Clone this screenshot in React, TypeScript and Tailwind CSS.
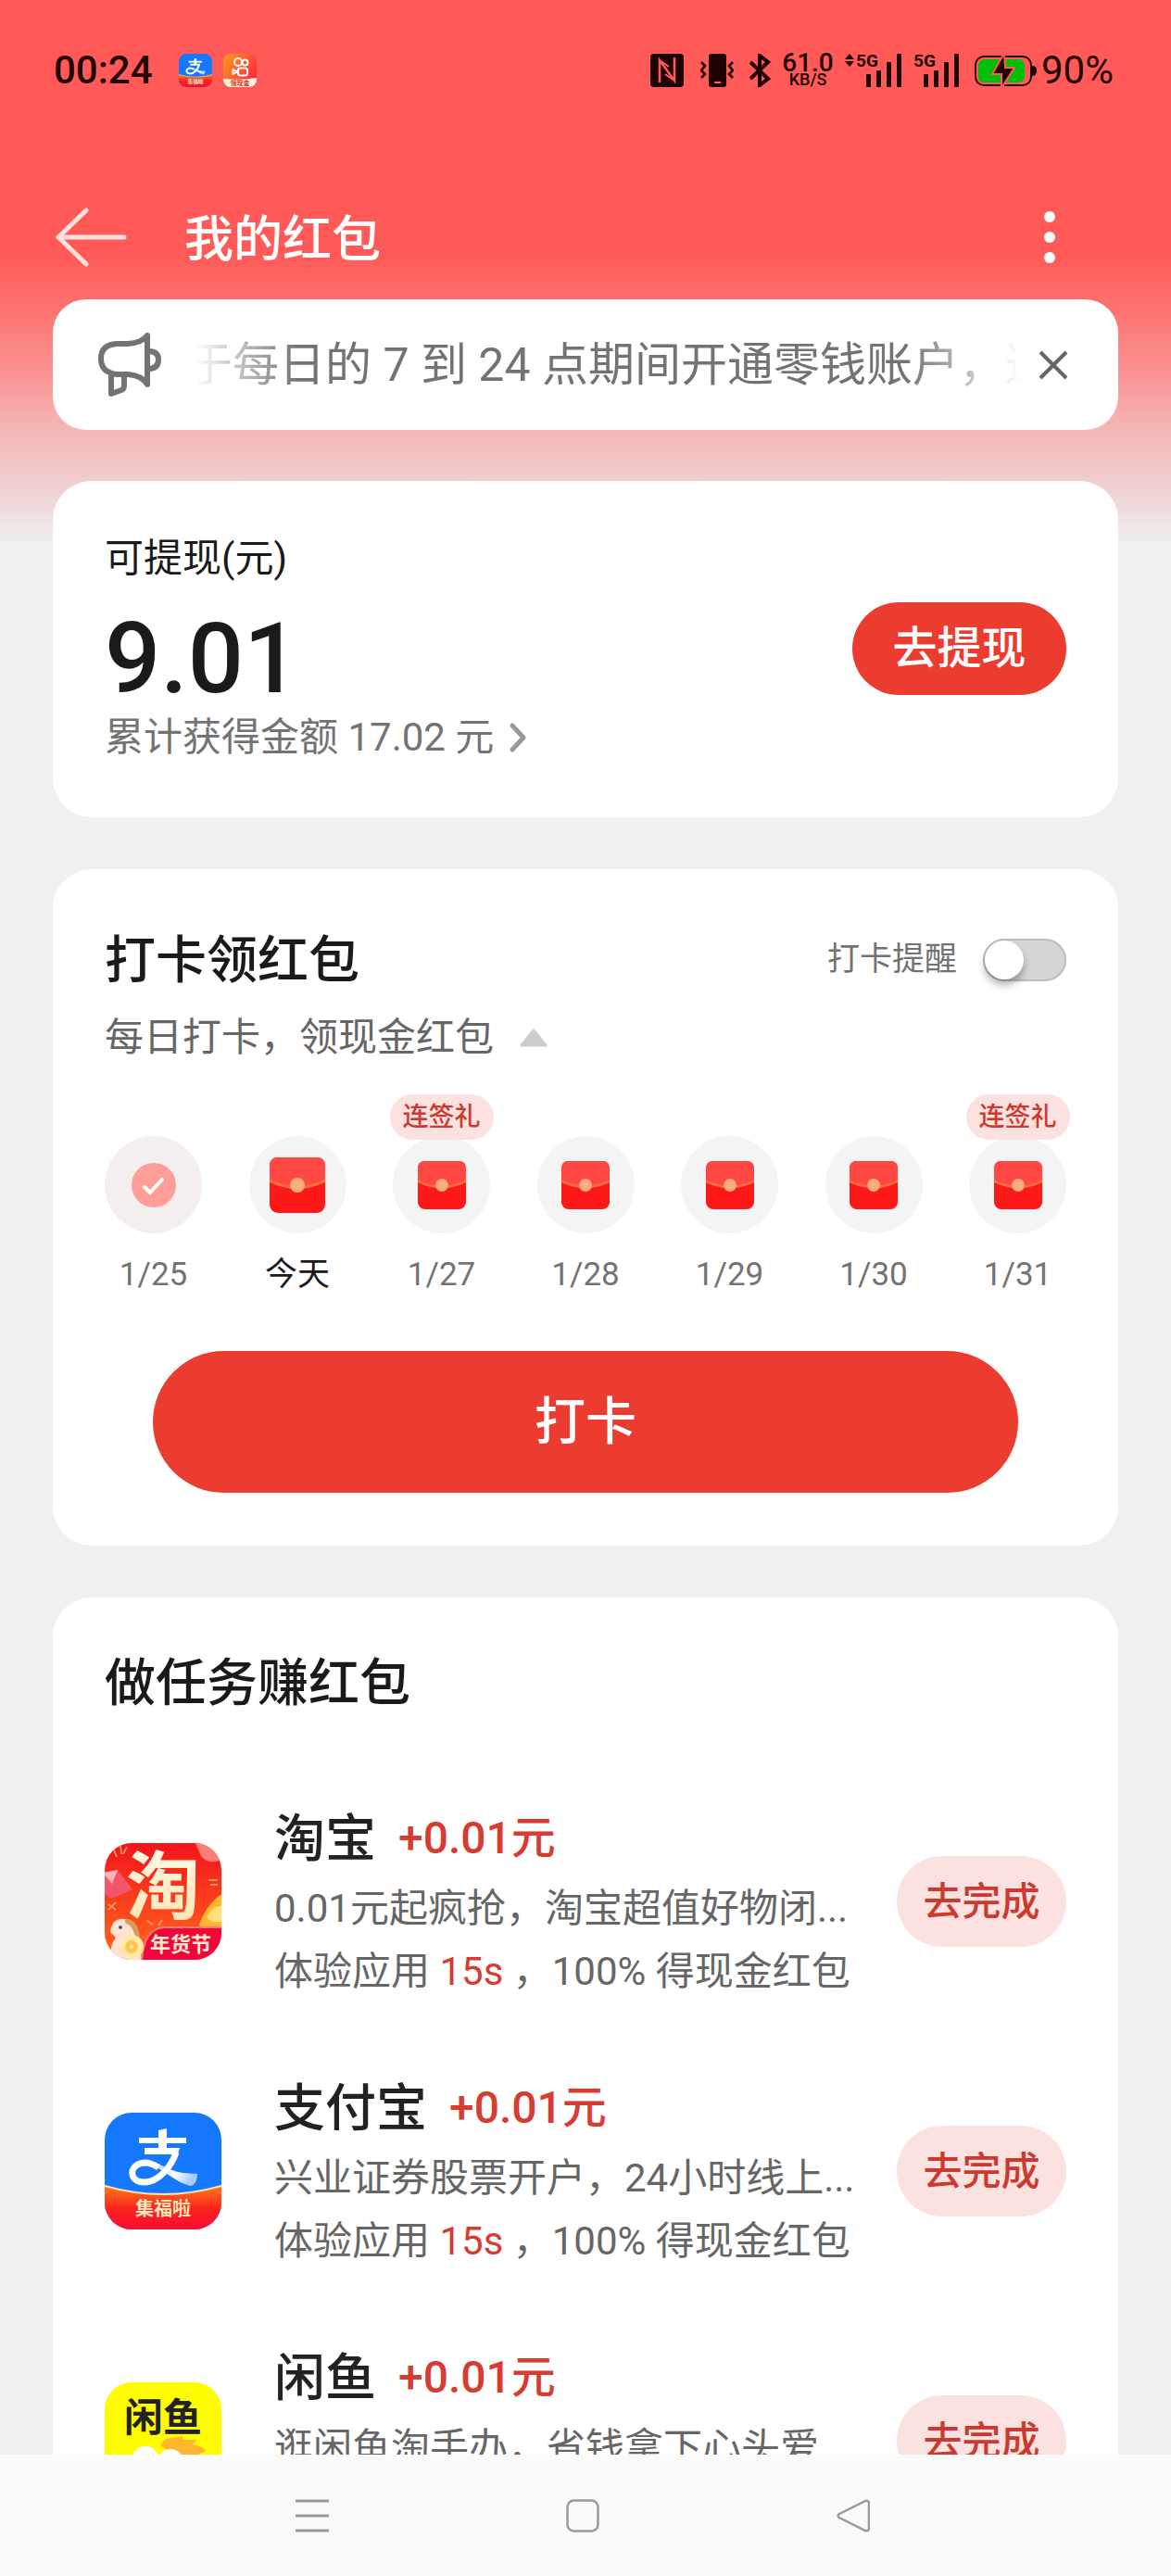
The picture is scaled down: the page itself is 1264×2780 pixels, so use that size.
import React, { useState } from 'react';

interface Day {
  label: string;
  state: 'done' | 'today' | 'future';
  gift?: boolean;
}

interface Task {
  name: string;
  reward: string;
  desc: string;
  icon: React.ReactNode;
}

const days: Day[] = [
  { label: '1/25', state: 'done' },
  { label: '今天', state: 'today' },
  { label: '1/27', state: 'future', gift: true },
  { label: '1/28', state: 'future' },
  { label: '1/29', state: 'future' },
  { label: '1/30', state: 'future' },
  { label: '1/31', state: 'future', gift: true },
];

const AlipayLogo: React.FC<{ id: string; className: string }> = ({ id, className }) => (
  <svg viewBox="0 0 126 126" className={className} aria-hidden="true">
    <defs>
      <clipPath id={`${id}-clip`}>
        <rect width="126" height="126" rx="29" />
      </clipPath>
      <linearGradient id={`${id}-band`} x1="0" y1="0" x2="0" y2="1">
        <stop offset="0" stopColor="#ff7a1c" />
        <stop offset="0.5" stopColor="#f9261c" />
        <stop offset="1" stopColor="#fb0b35" />
      </linearGradient>
      <linearGradient id={`${id}-tail`} x1="0" y1="0" x2="1" y2="0.3">
        <stop offset="0" stopColor="#fff" />
        <stop offset="0.35" stopColor="#b9d6ff" />
        <stop offset="0.7" stopColor="#fff" />
        <stop offset="1" stopColor="#a8ccff" />
      </linearGradient>
    </defs>
    <g clipPath={`url(#${id}-clip)`}>
      <rect width="126" height="126" fill="#1678ff" />
      <path d="M0 79 Q63 97 126 79 V126 H0Z" fill={`url(#${id}-band)`} />
      <path d="M0 79 Q63 97 126 79" fill="none" stroke="#ffe3b0" strokeWidth="2" />
      <path d="M58 19 L67 17 V44 H58Z M37 27 H88 V33 H37Z M43 38 H81 L79 45 H43Z" fill="#fff" />
      <path
        d="M40 53 C56 50 66 62 84 65 L100 66 C100 73 97 79 92 79 C76 75 64 61 50 57 C45 56 42 55 40 53Z"
        fill={`url(#${id}-tail)`}
      />
      <path d="M77 43 C72 58 58 75 43 75 C29 75 26 63 34 57 C41 52 50 54 58 59" fill="none" stroke="#fff" strokeWidth="7" />
      <text x="63" y="111" fontSize="20" fontWeight="700" fill="#ffe6bd" textAnchor="middle">集福啦</text>
    </g>
  </svg>
);

const TaobaoLogo: React.FC = () => (
  <svg viewBox="0 0 126 126" className="size-[126px] shrink-0" aria-hidden="true">
    <defs>
      <clipPath id="tb-clip">
        <rect width="126" height="126" rx="29" />
      </clipPath>
      <linearGradient id="tb-bg" x1="0" y1="0" x2="0" y2="1">
        <stop offset="0" stopColor="#f5141b" />
        <stop offset="1" stopColor="#ff6a1e" />
      </linearGradient>
      <linearGradient id="tb-char" x1="0" y1="0" x2="0" y2="1">
        <stop offset="0" stopColor="#fff9e6" />
        <stop offset="1" stopColor="#ffe2b0" />
      </linearGradient>
    </defs>
    <g clipPath="url(#tb-clip)">
      <rect width="126" height="126" fill="url(#tb-bg)" />
      <path d="M98 0 H126 V18 Q112 24 104 14Z" fill="#ff7f78" />
      <path d="M-2 32 L14 29 L30 50 L8 60 L-2 54Z" fill="#f5556b" />
      <path d="M-2 32 L8 44 L14 29Z" fill="#ffb4bd" />
      <path d="M9 5 L13 15 M17 2 L18 12 M24 4 L20 12 M4 66 L12 72 M12 64 L4 72 M46 84 L52 88 M62 83 L58 89 M112 40 H122 M114 45 H122" stroke="#ffb56b" strokeWidth="1.5" />
      <path d="M102 88 Q108 70 122 58 L128 54 V92 H104Z" fill="#ffb52e" />
      <path d="M110 80 Q118 66 128 68 V84 Q116 88 110 80Z" fill="#ffe07a" />
      <text x="63" y="75" fontSize="80" fontWeight="700" fill="url(#tb-char)" textAnchor="middle">淘</text>
      <path d="M6 96 Q8 80 22 82 Q36 86 36 104 L40 126 H8 Q4 112 12 102Z" fill="#ffe3d0" />
      <path d="M22 82 Q36 82 38 102 L33 104 Q32 90 22 86Z" fill="#d79c5e" />
      <circle cx="17" cy="91" r="2" fill="#4a5a8a" />
      <path d="M40 128 Q42 92 64 91 H128 V128Z" fill="#f0063c" stroke="#ff7d66" strokeWidth="2" />
      <circle cx="29" cy="112" r="13" fill="#ffe9a8" />
      <circle cx="29" cy="112" r="7" fill="#ffc84a" />
      <circle cx="29" cy="112" r="2" fill="#fff3cf" />
      <text x="82" y="117" fontSize="22" fontWeight="700" fill="#ffeccb" textAnchor="middle">年货节</text>
    </g>
  </svg>
);

const XianyuLogo: React.FC = () => (
  <svg viewBox="0 0 126 126" className="size-[126px] shrink-0" aria-hidden="true">
    <rect width="126" height="126" rx="29" fill="#fffb00" />
    <text x="63" y="53" fontSize="42" fontWeight="700" fill="#222" textAnchor="middle">闲鱼</text>
    <path d="M60 68 Q66 58 74 60 L84 58 L84 62 L99 62 L95 67 Q106 69 109 74 Q92 84 74 78Z" fill="#ffb52e" />
    <circle cx="44" cy="84" r="15" fill="#fff" />
    <circle cx="71" cy="86" r="14" fill="#fff" />
    <circle cx="46" cy="88" r="5" fill="#222" />
    <circle cx="70" cy="90" r="5" fill="#222" />
  </svg>
);

const KuaishouLogo: React.FC = () => (
  <svg viewBox="0 0 36 36" className="size-9" aria-hidden="true">
    <defs>
      <clipPath id="ks-clip">
        <rect width="36" height="36" rx="8" />
      </clipPath>
      <linearGradient id="ks-bg" x1="0" y1="0" x2="1" y2="0.6">
        <stop offset="0" stopColor="#ff9d1f" />
        <stop offset="1" stopColor="#fb2d3c" />
      </linearGradient>
    </defs>
    <g clipPath="url(#ks-clip)">
      <rect width="36" height="36" fill="url(#ks-bg)" />
      <g fill="none" stroke="#fff" strokeWidth="2">
        <circle cx="16" cy="9" r="4" />
        <circle cx="23.5" cy="9.5" r="3" />
        <rect x="16" y="15.5" width="10" height="8" rx="2.5" />
        <path d="M10.5 17 L15 19.5 L10.5 22Z" strokeLinejoin="round" />
      </g>
      <path d="M0 27 Q18 29 36 26 V36 H0Z" fill="#fff0dc" />
      <text x="18" y="34" fontSize="7" fontWeight="700" fill="#c0392b" textAnchor="middle">领现金</text>
    </g>
  </svg>
);

const SignalBars: React.FC<{ arrows?: boolean }> = ({ arrows }) => (
  <svg viewBox="0 0 62 36" className="h-9 w-[62px] overflow-visible" fill="#200303" aria-hidden="true">
    {arrows && <path d="M0 6 L5 0 L10 6Z M0 8 L5 14 L10 8Z" />}
    <text x="12" y="14" fontSize="19" fontWeight="700">5G</text>
    <rect x="23" y="22" width="5" height="14" rx="1" />
    <rect x="34" y="18" width="5" height="18" rx="1" />
    <rect x="45" y="9" width="5" height="27" rx="1" />
    <rect x="56" y="0" width="5" height="36" rx="1" />
  </svg>
);

const Envelope: React.FC<{ className: string }> = ({ className }) => (
  <svg viewBox="0 0 60 60" className={className} aria-hidden="true">
    <rect width="60" height="60" rx="9" fill="#fe1919" />
    <path d="M0 25 V9 Q0 0 9 0 H51 Q60 0 60 9 V25 Q30 40 0 25Z" fill="#ff4744" />
    <path d="M0 25 Q30 40 60 25" fill="none" stroke="#ff7139" strokeWidth="3" />
    <circle cx="30" cy="30" r="8" fill="#ffab80" />
  </svg>
);

const tasks: Task[] = [
  { name: '淘宝', reward: '+0.01元', desc: '0.01元起疯抢，淘宝超值好物闭...', icon: <TaobaoLogo /> },
  {
    name: '支付宝',
    reward: '+0.01元',
    desc: '兴业证券股票开户，24小时线上...',
    icon: <AlipayLogo id="task-alipay" className="size-[126px] shrink-0" />,
  },
  { name: '闲鱼', reward: '+0.01元', desc: '逛闲鱼淘手办，省钱拿下心头爱', icon: <XianyuLogo /> },
];

const StatusBar: React.FC = () => (
  <div className="flex h-[152px] shrink-0 items-center justify-between pl-[58px] pr-[62px] text-[#200303]">
    <div className="flex items-center gap-3">
      <span className="mr-4 text-[42px] font-medium leading-none">00:24</span>
      <AlipayLogo id="status-alipay" className="size-9" />
      <KuaishouLogo />
    </div>
    <div className="flex items-center">
      <svg viewBox="0 0 36 36" className="mr-[18px] size-9" aria-hidden="true">
        <rect width="36" height="36" rx="4" fill="#200303" />
        <path d="M10 31 V7 L26 29 V4" fill="none" stroke="#ff5a57" strokeWidth="2.5" />
        <path d="M10 7 L20 14 M26 29 L16 22" fill="none" stroke="#ff5a57" strokeWidth="2" />
      </svg>
      <svg viewBox="0 0 36 36" className="mr-4 size-9" aria-hidden="true">
        <rect x="9" width="19" height="36" rx="3" fill="#200303" />
        <rect x="15" y="30" width="7" height="2" fill="#ff5a57" />
        <path d="M1 9 L5 13 L1 18 L5 22 L1 26 M35 9 L31 13 L35 18 L31 22 L35 26" fill="none" stroke="#200303" strokeWidth="2.5" />
      </svg>
      <svg viewBox="0 0 24 36" className="mr-3 h-9 w-6" aria-hidden="true">
        <path d="M2 9 L21 27 L12 34 V2 L21 9 L2 27" fill="none" stroke="#200303" strokeWidth="4" />
      </svg>
      <div className="mr-3 flex w-14 flex-col items-center font-medium">
        <span className="text-[28px] leading-5">61.0</span>
        <span className="text-[18px] leading-4">KB/S</span>
      </div>
      <SignalBars arrows />
      <SignalBars />
      <svg viewBox="0 0 68 36" className="ml-4 h-9 w-[68px]" aria-hidden="true">
        <rect x="1" y="3" width="60" height="31" rx="9" fill="none" stroke="#200303" strokeWidth="2" />
        <path d="M62 13 Q67 13 67 18 Q67 24 62 24Z" fill="#200303" />
        <rect x="4" y="6" width="50" height="25" rx="6" fill="#00bf0b" />
        <path d="M32 -1 L19 22 H29 V37 L43 15 H33Z" fill="#200303" stroke="#ff5a57" strokeWidth="2" />
      </svg>
      <span className="ml-1 text-[42px] leading-none">90%</span>
    </div>
  </div>
);

const Header: React.FC = () => (
  <header className="mt-[37px] flex h-[134px] shrink-0 items-center px-[60px] text-white">
    <button type="button" aria-label="返回" className="mr-[61px]">
      <svg viewBox="0 0 78 64" className="h-16 w-[78px]" fill="none" stroke="#ffe0df" strokeWidth="5" strokeLinecap="round" strokeLinejoin="round">
        <path d="M33 3 L3 32 L33 61 M3 32 H74" />
      </svg>
    </button>
    <h1 className="pt-1.5 text-[53px] font-medium leading-none">我的红包</h1>
    <button type="button" aria-label="更多" className="ml-auto">
      <svg viewBox="0 0 142 58" className="h-[58px] w-[142px]" fill="#fff">
        <circle cx="71" cy="7" r="6" />
        <circle cx="71" cy="29" r="6" />
        <circle cx="71" cy="51" r="6" />
      </svg>
    </button>
  </header>
);

const Notice: React.FC<{ onClose: () => void }> = ({ onClose }) => (
  <section className="mx-[57px] mb-[55px] flex h-[141px] shrink-0 items-center rounded-[36px] bg-white pl-[48px] pr-[52px] text-[#737373]">
    <svg viewBox="0 0 70 70" className="size-[70px] shrink-0" fill="none" stroke="#737373" strokeWidth="6" strokeLinejoin="round" aria-hidden="true">
      <path d="M21 12 H33 Q48 11 54 3 V56 Q48 46 33 45 H21 Q4 43 4 28 Q4 13 21 12Z" />
      <path d="M55 20 Q66 20 66 29 Q66 39 55 39" />
      <path d="M15 46 V66 L26 62 Q29 61 29 57 V46" />
    </svg>
    <p className="ml-[26px] min-w-0 flex-1 overflow-hidden whitespace-nowrap text-[50px] leading-[72px] [mask-image:linear-gradient(to_right,transparent_8px,#000_120px,#000_calc(100%-130px),transparent_calc(100%-4px))]">
      于每日的 7 到 24 点期间开通零钱账户，避
    </p>
    <button type="button" aria-label="关闭" onClick={onClose} className="ml-3">
      <svg viewBox="0 0 36 36" className="size-9" fill="none" stroke="#666" strokeWidth="4">
        <path d="M4 4 L32 32 M32 4 L4 32" />
      </svg>
    </button>
  </section>
);

const Balance: React.FC = () => (
  <section className="flex items-center justify-between rounded-[42px] bg-white px-14 pb-[51px] pt-[50px]">
    <div className="pb-3">
      <h2 className="text-[42px] leading-[68px] text-[#1a1a1a]">可提现(元)</h2>
      <p className="mt-3 text-[106px] font-medium leading-[124px] text-[#1a1a1a]">9.01</p>
      <a href="#records" className="flex items-center gap-4 text-[42px] leading-[46px] text-[#737373]">
        累计获得金额 17.02 元
        <svg viewBox="0 0 20 34" className="h-[34px] w-5" fill="none" stroke="#999" strokeWidth="5" strokeLinecap="round" strokeLinejoin="round" aria-hidden="true">
          <path d="M4 4 L16 17 L4 30" />
        </svg>
      </a>
    </div>
    <button type="button" className="h-[100px] w-[231px] rounded-full bg-[#ec3b2f] text-[48px] font-medium text-white">
      去提现
    </button>
  </section>
);

const DayItem: React.FC<{ day: Day }> = ({ day }) => (
  <li className="relative flex w-[105px] flex-col items-center">
    {day.gift && (
      <span className="absolute -top-[45px] flex h-[49px] w-28 items-center justify-center rounded-full bg-[#fbe2e1] text-[28px] font-medium text-[#cd392f]">
        连签礼
      </span>
    )}
    <div className={`flex size-[105px] items-center justify-center rounded-full ${day.state === 'done' ? 'bg-[#f4eeee]' : 'bg-[#f4f4f4]'}`}>
      {day.state === 'done' && (
        <svg viewBox="0 0 48 48" className="size-12" aria-hidden="true">
          <circle cx="24" cy="24" r="24" fill="#ff9d99" />
          <path d="M14 26 L20 32 L33 18" fill="none" stroke="#fff" strokeWidth="4" strokeLinecap="round" strokeLinejoin="round" />
        </svg>
      )}
      {day.state === 'today' && <Envelope className="size-[60px]" />}
      {day.state === 'future' && <Envelope className="size-[52px]" />}
    </div>
    <span className={`mt-5 whitespace-nowrap text-[35px] leading-[50px] ${day.state === 'today' ? 'text-[#1a1a1a]' : 'text-[#737373]'}`}>
      {day.label}
    </span>
  </li>
);

const CheckIn: React.FC = () => {
  const [remind, setRemind] = useState(false);

  return (
    <section className="rounded-[42px] bg-white px-14 pb-[57px] pt-[56px]">
      <div className="flex items-center justify-between">
        <h2 className="text-[55px] font-medium leading-[84px] text-[#1a1a1a]">打卡领红包</h2>
        <label className="flex items-center gap-7 text-[35px] text-[#737373]">
          打卡提醒
          <input
            type="checkbox"
            role="switch"
            checked={remind}
            onChange={(e) => setRemind(e.target.checked)}
            className="flex h-[46px] w-[90px] appearance-none items-center rounded-full border-2 border-[#bdbdbd] bg-[#d6d6d6] before:size-[42px] before:rounded-full before:bg-white before:shadow-[0_6px_8px_rgba(0,0,0,0.3)] checked:justify-end checked:bg-[#ec3b2f]"
          />
        </label>
      </div>
      <p className="flex items-center gap-7 text-[42px] leading-[84px] text-[#666]">
        每日打卡，领现金红包
        <svg viewBox="0 0 30 20" className="h-5 w-[30px]" aria-hidden="true">
          <path d="M15 2 L28 18 H2Z" fill="#ccc" stroke="#ccc" strokeWidth="3" strokeLinejoin="round" />
        </svg>
      </p>
      <ul className="mt-16 flex justify-between">
        {days.map((day) => (
          <DayItem key={day.label} day={day} />
        ))}
      </ul>
      <div className="mt-[57px] px-[52px]">
        <button type="button" className="h-[153px] w-full rounded-full bg-[#ec3b2f] text-[55px] font-medium text-white">
          打卡
        </button>
      </div>
    </section>
  );
};

const TaskRow: React.FC<{ task: Task }> = ({ task }) => (
  <li className="flex items-center">
    {task.icon}
    <div className="ml-[57px] min-w-0 flex-1">
      <h3 className="flex items-center gap-6 text-[55px] font-medium leading-[84px] text-[#222]">
        {task.name}
        <span className="text-[48px] text-[#d63c31]">{task.reward}</span>
      </h3>
      <p className="whitespace-nowrap text-[42px] leading-[68px] text-[#666]">{task.desc}</p>
      <p className="whitespace-nowrap text-[42px] leading-[68px] text-[#666]">
        体验应用 <span className="text-[#d63c31]">15s</span> ，100% 得现金红包
      </p>
    </div>
    <button type="button" className="h-[98px] w-[183px] shrink-0 rounded-full bg-[#fbe2e1] text-[42px] font-medium text-[#cd392f]">
      去完成
    </button>
  </li>
);

const NavBar: React.FC = () => (
  <nav className="flex h-[131px] shrink-0 items-center justify-center gap-[256px] bg-[#fafafa] pr-[6px] text-[#999]">
    <button type="button" aria-label="最近任务">
      <svg viewBox="0 0 36 36" className="size-9" stroke="currentColor" strokeWidth="3">
        <path d="M0 2 H36 M0 18 H36 M0 34 H36" />
      </svg>
    </button>
    <button type="button" aria-label="主页">
      <svg viewBox="0 0 36 36" className="size-9" fill="none" stroke="currentColor" strokeWidth="2.5">
        <rect x="1.5" y="1.5" width="33" height="33" rx="7" />
      </svg>
    </button>
    <button type="button" aria-label="返回上一级">
      <svg viewBox="0 0 36 36" className="size-9" fill="none" stroke="currentColor" strokeWidth="2.5">
        <path d="M31 2 L3 16 Q0 18 3 20 L31 34 Q35 35 35 31 V5 Q35 1 31 2Z" />
      </svg>
    </button>
  </nav>
);

export default function App() {
  const [showNotice, setShowNotice] = useState(true);

  return (
    <div
      lang="zh-CN"
      className="flex h-screen flex-col bg-[#eff0f2] bg-[linear-gradient(to_bottom,#ff5a57_0px,#ff5a57_275px,#fc6f6d_325px,#f99291_400px,#f5b4b4_460px,#f1cdce_520px,#eff0f2_590px)] font-[Roboto,'Noto_Sans_CJK_SC',sans-serif]"
    >
      <StatusBar />
      <Header />
      {showNotice && <Notice onClose={() => setShowNotice(false)} />}
      <main className="flex min-h-0 flex-1 flex-col gap-14 overflow-y-auto px-[57px] [scrollbar-width:none] *:shrink-0">
        <Balance />
        <CheckIn />
        <section className="rounded-t-[42px] bg-white px-14 pb-14 pt-[50px]">
          <h2 className="mb-12 text-[55px] font-medium leading-[84px] text-[#1a1a1a]">做任务赚红包</h2>
          <ul className="flex flex-col gap-[71px] pt-9">
            {tasks.map((task) => (
              <TaskRow key={task.name} task={task} />
            ))}
          </ul>
        </section>
      </main>
      <NavBar />
    </div>
  );
}
